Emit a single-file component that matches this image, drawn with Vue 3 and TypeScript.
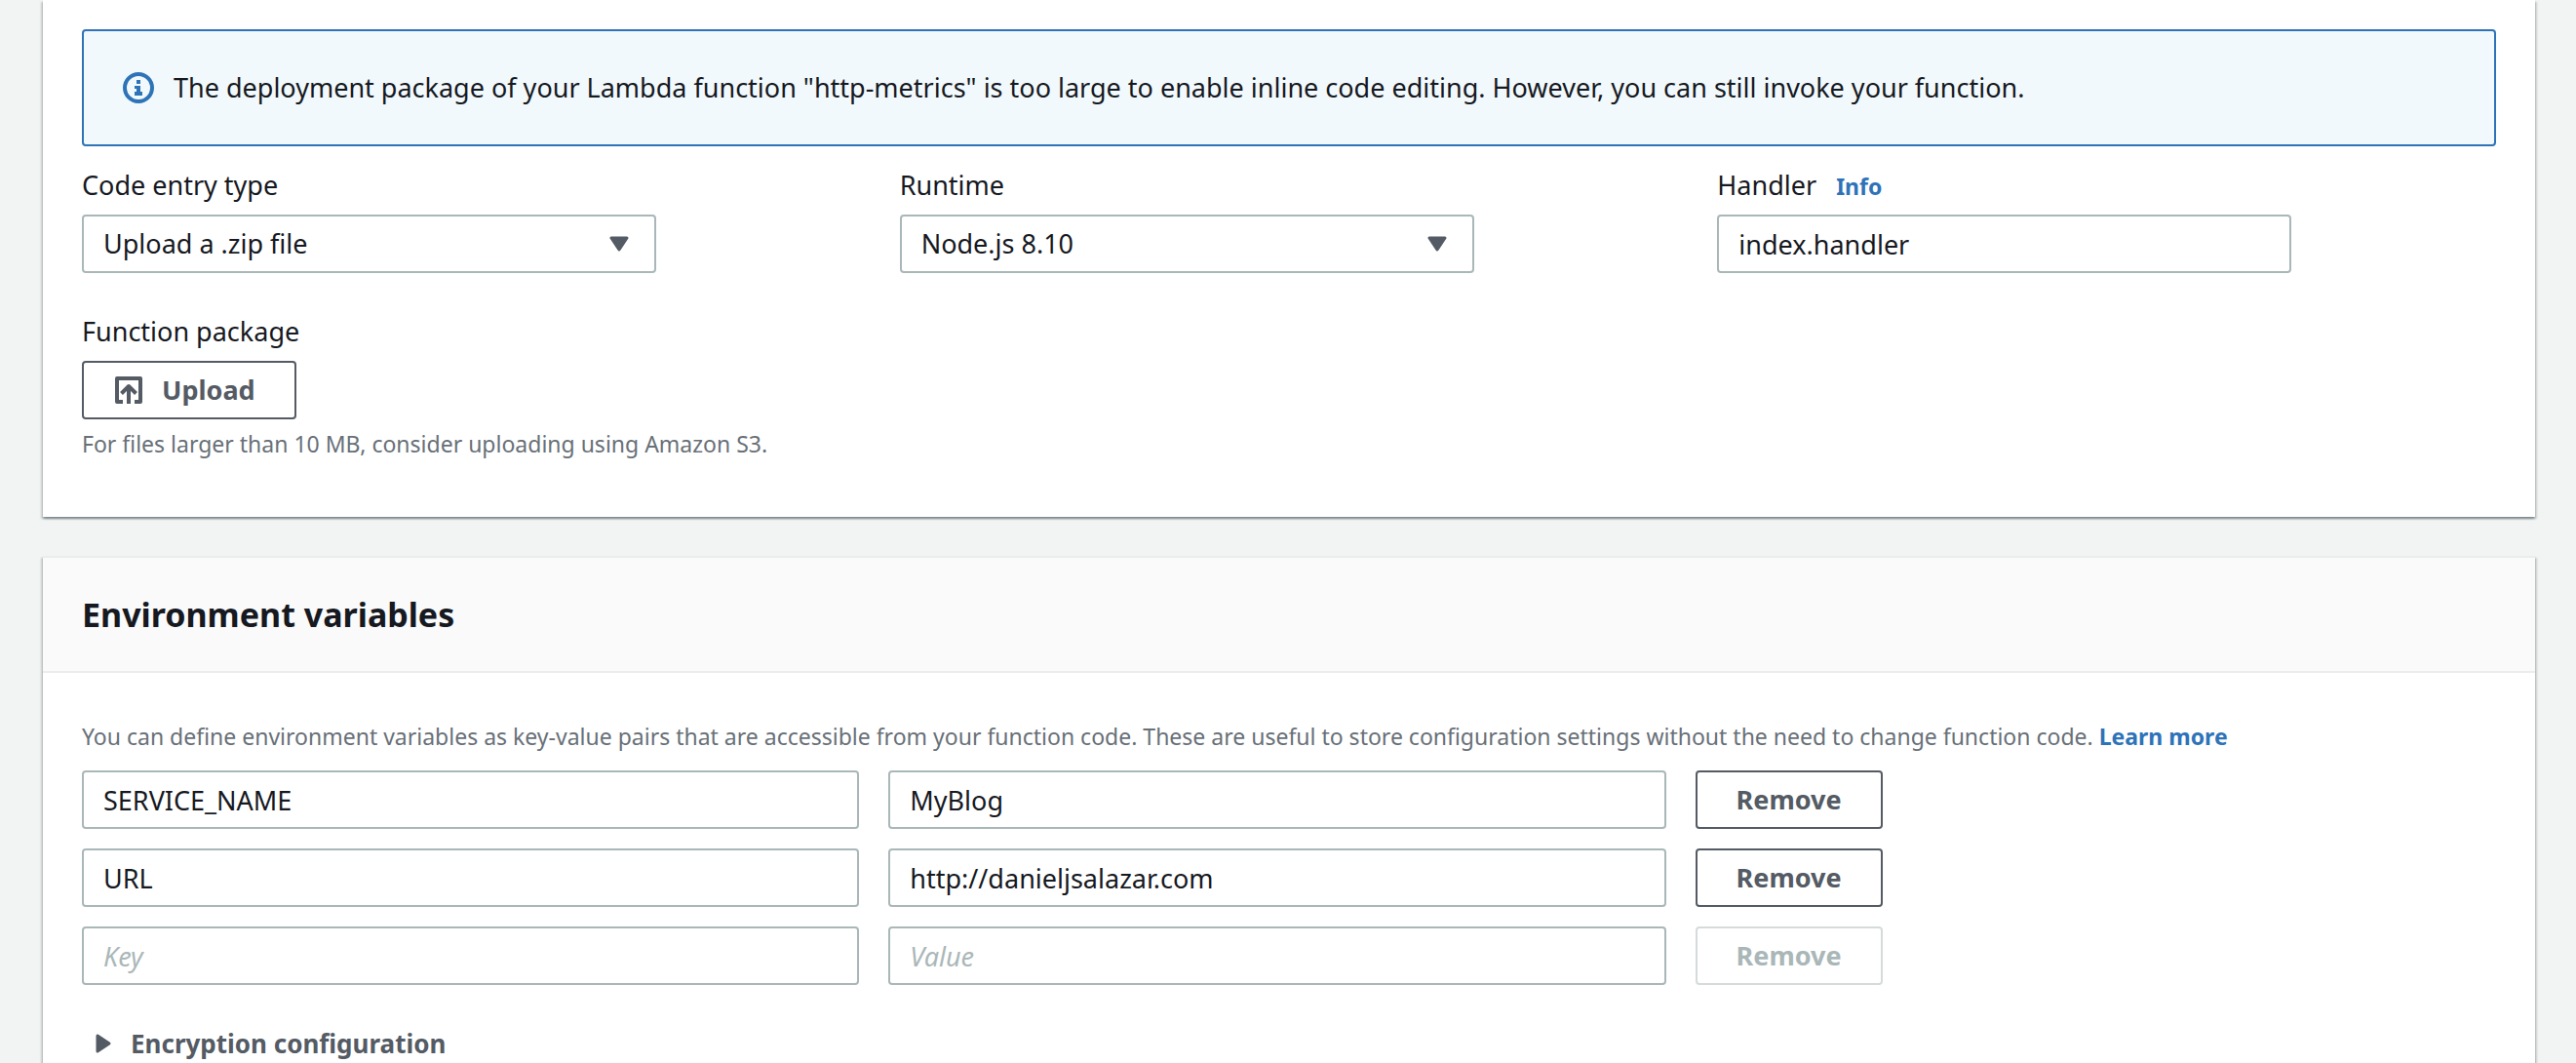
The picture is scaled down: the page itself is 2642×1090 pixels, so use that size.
<script setup lang="ts">
import { reactive, ref } from 'vue'

interface EnvVariable {
  id: number
  key: string
  value: string
}

const entryTypes = ['Upload a .zip file', 'Upload a file from Amazon S3']
const runtimes = ['Node.js 8.10', 'Node.js 6.10', 'Python 3.7']

const entryType = ref(entryTypes[0])
const runtime = ref(runtimes[0])
const handler = ref('index.handler')

const variables = reactive<EnvVariable[]>([
  { id: 1, key: 'SERVICE_NAME', value: 'MyBlog' },
  { id: 2, key: 'URL', value: 'http://danieljsalazar.com' },
  { id: 3, key: '', value: '' },
])

const isEmpty = (item: EnvVariable) => !item.key && !item.value

function remove(id: number) {
  const index = variables.findIndex((item) => item.id === id)
  if (index >= 0) variables.splice(index, 1)
}
</script>

<template>
  <main class="page">
    <section class="card code" aria-label="Function code">
      <div class="banner" role="status">
        <svg class="banner-icon" viewBox="0 0 32 32" aria-hidden="true">
          <circle cx="16" cy="16" r="14" fill="none" stroke="currentColor" stroke-width="4" />
          <path d="M14 8h4v4h-4zM12 14h6v6h2v4h-8v-4h2v-3h-2z" fill="currentColor" />
        </svg>
        <p>The deployment package of your Lambda function "http-metrics" is too large to enable inline code editing. However, you can still invoke your function.</p>
      </div>

      <div class="fields">
        <div class="field">
          <div class="label-row"><label for="entry-type">Code entry type</label></div>
          <div class="select">
            <select id="entry-type" v-model="entryType" class="control">
              <option v-for="option in entryTypes" :key="option">{{ option }}</option>
            </select>
            <svg class="select-caret" viewBox="0 0 20 16" aria-hidden="true">
              <path d="M2 2h16l-8 12z" />
            </svg>
          </div>
        </div>
        <div class="field">
          <div class="label-row"><label for="runtime">Runtime</label></div>
          <div class="select">
            <select id="runtime" v-model="runtime" class="control">
              <option v-for="option in runtimes" :key="option">{{ option }}</option>
            </select>
            <svg class="select-caret" viewBox="0 0 20 16" aria-hidden="true">
              <path d="M2 2h16l-8 12z" />
            </svg>
          </div>
        </div>
        <div class="field">
          <div class="label-row">
            <label for="handler">Handler</label>
            <a href="#handler-info" class="link">Info</a>
          </div>
          <input id="handler" v-model="handler" class="control" type="text" />
        </div>
      </div>

      <div class="package">
        <div id="package-label" class="label-row">Function package</div>
        <button type="button" class="button" aria-describedby="package-label">
          <svg class="upload-icon" viewBox="0 0 28 28" aria-hidden="true">
            <path d="M8 26H2V2h24v24h-6" />
            <path d="M14 28V10M6.500 17.500 14 10l7.500 7.500" />
          </svg>
          Upload
        </button>
        <p class="hint">For files larger than 10 MB, consider uploading using Amazon S3.</p>
      </div>
    </section>

    <section class="card env" aria-labelledby="env-title">
      <header class="card-header">
        <h2 id="env-title">Environment variables</h2>
      </header>
      <div class="env-body">
        <p class="hint">
          You can define environment variables as key-value pairs that are accessible from your function code. These are useful to store configuration settings without the need to change function code.
          <a href="#learn-more" class="link">Learn more</a>
        </p>

        <div class="variables">
          <div v-for="item in variables" :key="item.id" class="variable">
            <input v-model="item.key" class="control" type="text" placeholder="Key" aria-label="Key" />
            <input v-model="item.value" class="control" type="text" placeholder="Value" aria-label="Value" />
            <button type="button" class="button" :disabled="isEmpty(item)" @click="remove(item.id)">Remove</button>
          </div>
        </div>

        <details class="encryption">
          <summary>
            <svg class="summary-caret" viewBox="0 0 16 20" aria-hidden="true">
              <path d="M2 2v16l12-8z" />
            </svg>
            Encryption configuration
          </summary>
        </details>
      </div>
    </section>
  </main>
</template>

<style>
body {
  margin: 0;
  background: #f2f3f3;
}
</style>

<style scoped>
.page {
  box-sizing: border-box;
  min-height: 100vh;
  padding: 0 42px 0 44px;
  display: flex;
  flex-direction: column;
  gap: 40px;
  overflow: hidden;
  font-family: "Noto Sans", "Open Sans", sans-serif;
  font-size: 27px;
  font-weight: 450;
  line-height: 40px;
  color: #16191f;
}

p,
h2 {
  margin: 0;
}

.card {
  background: #fff;
  box-shadow:
    0 2px 2px 0 rgba(0, 28, 36, 0.3),
    2px 2px 2px 0 rgba(0, 28, 36, 0.15),
    -2px 2px 2px 0 rgba(0, 28, 36, 0.15);
}

.code {
  padding: 30px 40px 60px;
}

.banner {
  display: flex;
  align-items: center;
  gap: 20px;
  padding: 38px 40px;
  border: 2px solid #2e73b8;
  border-radius: 4px;
  background: #f2f9fd;
}

.banner-icon {
  flex: none;
  width: 32px;
  height: 32px;
  color: #2e73b8;
}

.fields {
  display: grid;
  grid-template-columns: repeat(3, 1fr);
  gap: 40px;
  margin-top: 20px;
}

.field {
  max-width: 589px;
}

.label-row {
  display: flex;
  align-items: baseline;
  gap: 20px;
  margin-bottom: 10px;
}

.link {
  font-size: 23px;
  font-weight: 700;
  line-height: 30px;
  color: #2e73b8;
  text-decoration: none;
}

.control {
  box-sizing: border-box;
  display: block;
  width: 100%;
  height: 60px;
  margin: 0;
  padding: 0 20px;
  border: 2px solid #aab7b8;
  border-radius: 4px;
  background: #fff;
  font: inherit;
  color: inherit;
  appearance: none;
}

.control::placeholder {
  color: #aab7b8;
  font-style: italic;
  opacity: 1;
}

.select {
  position: relative;
}

.select-caret {
  position: absolute;
  top: 22px;
  right: 28px;
  width: 20px;
  height: 16px;
  pointer-events: none;
}

.select-caret,
.summary-caret {
  fill: #545b64;
  stroke: #545b64;
  stroke-width: 3;
  stroke-linejoin: round;
}

.package {
  margin-top: 40px;
}

.button {
  display: inline-flex;
  align-items: center;
  justify-content: center;
  gap: 20px;
  box-sizing: border-box;
  height: 60px;
  margin: 0;
  padding: 0 40px;
  border: 2px solid #545b64;
  border-radius: 4px;
  background: #fff;
  font: inherit;
  font-weight: 700;
  color: #545b64;
}

.button:disabled {
  border-color: #d5dbdb;
  color: #aab7b8;
}

.upload-icon {
  width: 28px;
  height: 28px;
  margin-left: -8px;
  fill: none;
  stroke: currentColor;
  stroke-width: 4;
  stroke-linejoin: round;
}

.hint {
  font-size: 23px;
  line-height: 30px;
  color: #687078;
}

.package .hint {
  margin-top: 10px;
}

.package .button {
  display: flex;
}

.env {
  flex: 1;
  border-top: 2px solid #eaeded;
}

.card-header {
  padding: 36px 40px;
  border-bottom: 2px solid #eaeded;
  background: #fafafa;
}

h2 {
  font-size: 34px;
  line-height: 44px;
  font-weight: 700;
}

.env-body {
  padding: 50px 40px 0;
}

.variables {
  display: flex;
  flex-direction: column;
  gap: 20px;
  margin-top: 20px;
}

.variable {
  display: grid;
  grid-template-columns: 33fr 33fr 34fr;
  gap: 30px;
}

.variable .button {
  justify-self: start;
}

.encryption {
  margin-top: 40px;
}

summary {
  display: flex;
  align-items: center;
  gap: 20px;
  padding-left: 14px;
  font-size: 26px;
  font-weight: 700;
  color: #545b64;
  list-style: none;
  cursor: pointer;
}

.summary-caret {
  width: 16px;
  height: 20px;
}
</style>
